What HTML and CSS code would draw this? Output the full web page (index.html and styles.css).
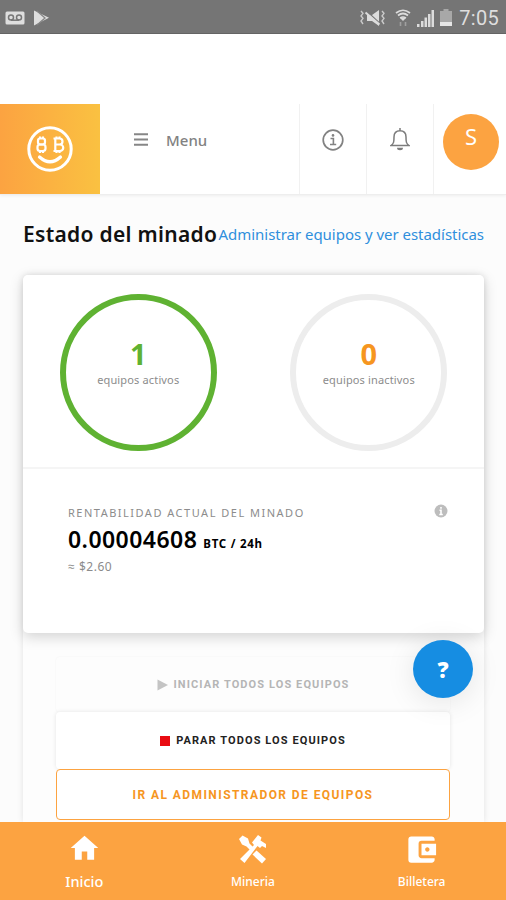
FILE: index.html
```html
<!DOCTYPE html>
<html lang="es">
<head>
  <meta charset="UTF-8">
  <meta name="viewport" content="width=device-width, initial-scale=1">
  <title>Estado del minado</title>
  <link rel="stylesheet" href="styles.css">
</head>
<body>
  <div class="status-bar">
    <div class="status-left">
      <svg width="20" height="14" viewBox="0 0 20 14">
        <rect x="0.5" y="0.5" width="19" height="13" rx="1.5" fill="#dedede"/>
        <g fill="none" stroke="#777" stroke-width="1.5">
          <circle cx="6" cy="6.6" r="2.5"/>
          <circle cx="14" cy="6.6" r="2.5"/>
          <path d="M6 9.2h8"/>
        </g>
      </svg>
      <svg width="17" height="16" viewBox="0 0 17 16">
        <path d="M1 0.5L16 7.8 1 15.5z" fill="#dedede"/>
        <path d="M4 1l8 7-8 7" stroke="#858585" stroke-width="1.3" fill="none"/>
      </svg>
    </div>
    <div class="status-right">
      <svg class="icon-mute" width="26" height="18" viewBox="0 0 26 18">
        <path d="M7 6h5l7-5v16l-7-5H7z" fill="#dcdcdc"/>
        <path d="M6 1.500l15 14" stroke="#777" stroke-width="1.500"/>
        <path d="M5.500 3.500l14 12" stroke="#dcdcdc" stroke-width="2"/>
        <path d="M1 2l2 2.300L1 7l2 2.300L1 12l2 3M22 2l2 2.300L22 7l2 2.300-2 2.700 2 3" fill="none" stroke="#cacaca" stroke-width="1.400"/>
      </svg>
      <svg class="icon-wifi" width="16" height="18" viewBox="0 0 16 18">
        <g fill="none" stroke="#dcdcdc" stroke-width="1.700">
          <path d="M1 4q7-5.500 14 0M3 6.500q5-4 10 0M5.200 9q2.800-2 5.600 0"/>
        </g>
        <path d="M8 12L4.500 8.500h7z" fill="#dcdcdc"/>
        <path d="M5.500 17v-4M10.500 13v4" stroke="#a0a0a0" stroke-width="1.600"/>
      </svg>
      <svg class="icon-signal" width="18" height="18" viewBox="0 0 18 18" fill="#dcdcdc">
        <path d="M0 15h2.500v3H0zM4 12h2.500v6H4zM7.500 8.500h2.500v9.500H7.500zM11 5h2.500v13H11zM14.500 1H17v17h-2.500z"/>
      </svg>
      <svg class="icon-battery" width="12" height="17" viewBox="0 0 12 17">
        <path d="M3.500 0h5v2H12v15H0V2h3.500z" fill="#a8a8a8"/>
        <path d="M0 13h12v4H0z" fill="#e6e6e6"/>
      </svg>
      <span class="clock">7:05</span>
    </div>
  </div>

  <header class="header">
    <a class="logo" href="#">
      <svg width="46" height="46" viewBox="0 0 46 46" fill="none" stroke="#fff">
        <circle cx="23" cy="23" r="21.200" stroke-width="3"/>
        <g stroke-width="2.200">
          <rect x="11" y="12.500" width="7" height="6" rx="2.200"/>
          <rect x="10.500" y="18.500" width="8" height="6.500" rx="2.500"/>
          <path d="M13 10.500v2M16 10.500v2M13 25v2M16 25v2"/>
          <path d="M26.500 12.500h6a3 3 0 0 1 0 6H28h5a3.200 3.200 0 0 1 0 6.500h-6.500M28.300 12.500V25M29.500 10.500v2M32.500 10.500v2M29.500 25v2M32.500 25v2"/>
        </g>
        <path d="M12.500 31q10.500 9.500 21 0" stroke-width="3.200" stroke-linecap="round"/>
      </svg>
    </a>
    <a class="menu" href="#">
      <svg width="14" height="13" viewBox="0 0 14 13" stroke="#868686" stroke-width="2">
        <path d="M0 1.200h14M0 6.500h14M0 11.800h14"/>
      </svg>
      <span>Menu</span>
    </a>
    <a class="header-item" href="#">
      <svg width="22" height="22" viewBox="0 0 22 22" fill="none" stroke="#828282">
        <circle cx="11" cy="11" r="9.800" stroke-width="1.700"/>
        <path d="M8.500 9.500h2.900v5.800M8 15.500h6.200" stroke-width="1.600"/>
        <circle cx="11" cy="6.400" r="1.300" fill="#828282" stroke="none"/>
      </svg>
    </a>
    <a class="header-item header-bell" href="#">
      <svg width="20" height="23" viewBox="0 0 20 23" fill="none" stroke="#7c7c7c" stroke-width="1.500">
        <path d="M10 0v3M1 17.500c2.800-2 3-3.500 3-8.500 0-4 2.500-6.300 6-6.300s6 2.300 6 6.300c0 5 .2 6.500 3 8.500z"/>
        <path d="M7 19.800h6a3 2.500 0 0 1-6 0z" fill="#7c7c7c" stroke="none"/>
      </svg>
    </a>
    <div class="header-user">
      <div class="avatar">S</div>
    </div>
  </header>

  <main class="content">
    <div class="section-title">
      <h1>Estado del minado</h1>
      <a href="#">Administrar equipos y ver estadísticas</a>
    </div>

    <section class="panel">
      <div class="card">
        <div class="counters">
          <div class="counter active">
            <strong>1</strong>
            <span>equipos activos</span>
          </div>
          <div class="counter inactive">
            <strong>0</strong>
            <span>equipos inactivos</span>
          </div>
        </div>
        <div class="profit">
          <div class="profit-head">
            <span class="profit-label">Rentabilidad actual del minado</span>
            <svg width="14" height="14" viewBox="0 0 14 14">
              <circle cx="7" cy="7" r="6.500" fill="#bdbdbd"/>
              <path d="M7 3v1.800M5.500 6.200H7v4M5.300 10.500h3.500" stroke="#fff" stroke-width="1.600" fill="none"/>
            </svg>
          </div>
          <div class="profit-value"><span class="amount">0.00004608</span><span class="unit">BTC / 24h</span></div>
          <div class="profit-usd">≈ $2.60</div>
        </div>
      </div>

      <div class="actions">
        <button class="btn btn-start" disabled>
          <svg width="11" height="12" viewBox="0 0 11 12"><path d="M0.500 0.500L11 6 0.500 11.500z" fill="#c4c4c4"/></svg>
          <span>Iniciar todos los equipos</span>
        </button>
        <button class="btn btn-stop">
          <i class="stop-icon"></i>
          <span>Parar todos los equipos</span>
        </button>
        <button class="btn btn-manage"><span>Ir al administrador de equipos</span></button>
      </div>
    </section>
  </main>

  <button class="help">?</button>

  <nav class="tabs">
    <a class="tab tab-home" href="#">
      <svg width="33" height="34" viewBox="0 0 24 24" fill="#fff"><path d="M10 20.500v-6h4v6h5v-8.500h3L12 3 2 12h3v8.500z"/></svg>
      <span>Inicio</span>
    </a>
    <a class="tab tab-mining" href="#">
      <svg width="30" height="30" viewBox="0 0 30 30" fill="#fff">
        <path d="M1 5L4.500 1.500 10 4.500l1.500 5 4 4-3 3-4-4-4.500-2z"/>
        <path d="M18.500 16.500l9.500 8.500-4 4.500-9.500-9z"/>
        <path d="M2 25L16 11l-2-2.500L20 1l3.500 2.500-1 3 5.500 3.500v4l-4-2-2 2-2.500-2L6.500 29z"/>
      </svg>
      <span>Mineria</span>
    </a>
    <a class="tab tab-wallet" href="#">
      <svg width="35" height="35" viewBox="0 0 24 24" fill="#fff"><path d="M21 18v1c0 1.100-.9 2-2 2H5a2 2 0 0 1-2-2V5a2 2 0 0 1 2-2h14c1.100 0 2 .9 2 2v1h-9a2 2 0 0 0-2 2v8c0 1.100.890 2 2 2h9zm-9-2h10V8H12v8zm4-2.500c-.83 0-1.500-.67-1.500-1.500s.67-1.500 1.500-1.500 1.500.67 1.500 1.500-.67 1.500-1.500 1.500z"/></svg>
      <span>Billetera</span>
    </a>
  </nav>
</body>
</html>
```
FILE: styles.css
```css
:root {
  --orange: #fca341;
  --orange-text: #f6961f;
  --green: #5fb232;
  --blue: #168de2;
  --line: #f1f1f1;
  --grey: #8c8c8c;
}

* {
  box-sizing: border-box;
}

body {
  margin: 0;
  height: 900px;
  overflow: hidden;
  display: flex;
  flex-direction: column;
  background: #fcfcfc;
  color: #111;
  font-family: "Noto Sans", "Open Sans", sans-serif;
}

a {
  text-decoration: none;
  color: inherit;
}

svg {
  display: block;
  flex: none;
}

/* status bar */
.status-bar {
  flex: none;
  height: 34px;
  padding: 2px 7px 0 5px;
  display: flex;
  align-items: center;
  justify-content: space-between;
  background: #757575;
  border-bottom: 1px solid #656565;
}

.status-left,
.status-right {
  display: flex;
  align-items: center;
}

.status-left {
  gap: 8px;
}

.icon-wifi {
  margin-left: 9px;
}

.icon-signal {
  margin-left: 6px;
}

.icon-battery {
  margin: 0 7px 0 5px;
}

.clock {
  color: #dedede;
  font-family: Roboto, sans-serif;
  font-size: 20px;
  line-height: 24px;
  letter-spacing: 0.3px;
}

/* header */
.header {
  flex: none;
  height: 161px;
  padding-top: 70px;
  display: flex;
  background: #fff;
  border-bottom: 1px solid #eee;
  box-shadow: 0 1px 3px rgba(0, 0, 0, 0.06);
}

.logo {
  width: 100px;
  display: flex;
  align-items: center;
  justify-content: center;
  background: linear-gradient(90deg, #fca341, #fac141);
}

.menu {
  flex: 1;
  display: flex;
  align-items: center;
  gap: 18px;
  padding: 0 0 19px 34px;
  color: #828282;
  font-size: 15px;
  font-weight: 500;
}

.header-item {
  width: 67px;
  padding-bottom: 19px;
  display: flex;
  align-items: center;
  justify-content: center;
  border-left: 1px solid var(--line);
}

.header-user {
  width: 73px;
  padding: 10px 0 0 9px;
  border-left: 1px solid var(--line);
}

.avatar {
  width: 56px;
  height: 56px;
  border-radius: 50%;
  background: var(--orange);
  color: #fff;
  font-size: 22px;
  line-height: 44px;
  text-align: center;
}

/* content */
.content {
  flex: 1;
  min-height: 0;
  padding: 0 22px 0 23px;
  display: flex;
  flex-direction: column;
}

.section-title {
  height: 78px;
  margin-bottom: 2px;
  flex: none;
  display: flex;
  align-items: center;
  justify-content: space-between;
  white-space: nowrap;
}

.section-title h1 {
  margin: 0;
  font-size: 21px;
  font-weight: 600;
  letter-spacing: 0.3px;
}

.section-title a {
  color: #2f8fdc;
  font-size: 15px;
  letter-spacing: -0.03px;
}

.panel {
  flex: 1;
  background: #fdfdfd;
  border-radius: 5px 5px 0 0;
  box-shadow: 0 0 6px rgba(0, 0, 0, 0.11);
}

.card {
  height: 358px;
  background: #fff;
  border-radius: 5px;
  box-shadow: 0 4px 14px rgba(0, 0, 0, 0.17);
}

.counters {
  height: 194px;
  padding-top: 19px;
  display: grid;
  grid-template-columns: 1fr 1fr;
  justify-items: center;
  border-bottom: 2px solid #f5f5f5;
}

.counter {
  width: 157px;
  height: 157px;
  padding-top: 40px;
  display: flex;
  flex-direction: column;
  align-items: center;
  border: 6px solid #ededed;
  border-radius: 50%;
}

.counter strong {
  font-size: 29px;
  line-height: 28px;
  font-weight: 700;
}

.counter span {
  margin-top: 4px;
  color: var(--grey);
  font-size: 11px;
  line-height: 16px;
  letter-spacing: 0.15px;
}

.counter.active {
  border-color: var(--green);
}

.counter.active strong {
  color: var(--green);
}

.counter.inactive strong {
  color: var(--orange-text);
}

.profit {
  padding: 35px 36px 0 45px;
}

.profit-head {
  display: flex;
  justify-content: space-between;
}

.profit-label {
  color: var(--grey);
  font-size: 11px;
  line-height: 17px;
  letter-spacing: 1.5px;
  text-transform: uppercase;
}

.profit-value {
  height: 37px;
  display: flex;
  align-items: baseline;
  gap: 6px;
  line-height: 36px;
  color: #000;
}

.amount {
  font-size: 23px;
  font-weight: 600;
  letter-spacing: 0.45px;
}

.unit {
  font-size: 11.5px;
  font-weight: 700;
  letter-spacing: 0.75px;
}

.profit-usd {
  color: var(--grey);
  font-size: 12px;
  line-height: 18px;
  letter-spacing: 0.5px;
}

/* buttons */
.actions {
  padding: 24px 34px 0 33px;
  display: flex;
  flex-direction: column;
}

.btn {
  height: 55px;
  padding: 0;
  display: flex;
  align-items: center;
  justify-content: center;
  gap: 6px;
  border: 0;
  border-radius: 4px;
  background: #fff;
  color: #222;
  font-family: Roboto, sans-serif;
  font-size: 11px;
  font-weight: 700;
  letter-spacing: 1.1px;
  text-transform: uppercase;
}

.btn-start {
  color: #b5b5b5;
  background: #fdfdfd;
  box-shadow: 0 0 2px rgba(0, 0, 0, 0.06);
}

.btn-stop {
  height: 57px;
  box-shadow: 0 0 4px rgba(0, 0, 0, 0.1);
}

.stop-icon {
  width: 10px;
  height: 10px;
  background: #e90c12;
}

.btn-manage {
  height: 51px;
  position: relative;
  border: 1.5px solid var(--orange);
  color: var(--orange-text);
  font-size: 12px;
  letter-spacing: 1.42px;
}

.help {
  position: absolute;
  left: 413px;
  top: 640px;
  width: 60px;
  height: 58px;
  padding: 0;
  border: 0;
  border-radius: 50%;
  background: var(--blue);
  color: #fff;
  font: 900 22px/56px "Noto Sans", sans-serif;
  box-shadow: 0 4px 30px rgba(0, 0, 0, 0.1);
}

/* bottom tabs */
.tabs {
  flex: none;
  height: 78px;
  position: relative;
  display: grid;
  grid-template-columns: repeat(3, 1fr);
  background: var(--orange);
  color: #fff;
}

.tab {
  display: grid;
  grid-template-rows: 50px 16px;
  justify-items: center;
  align-items: center;
  align-content: start;
  padding-top: 2px;
  font-size: 12px;
  font-weight: 500;
  line-height: 16px;
}

.tab-home {
  padding-top: 1px;
  font-size: 14.5px;
}
```
